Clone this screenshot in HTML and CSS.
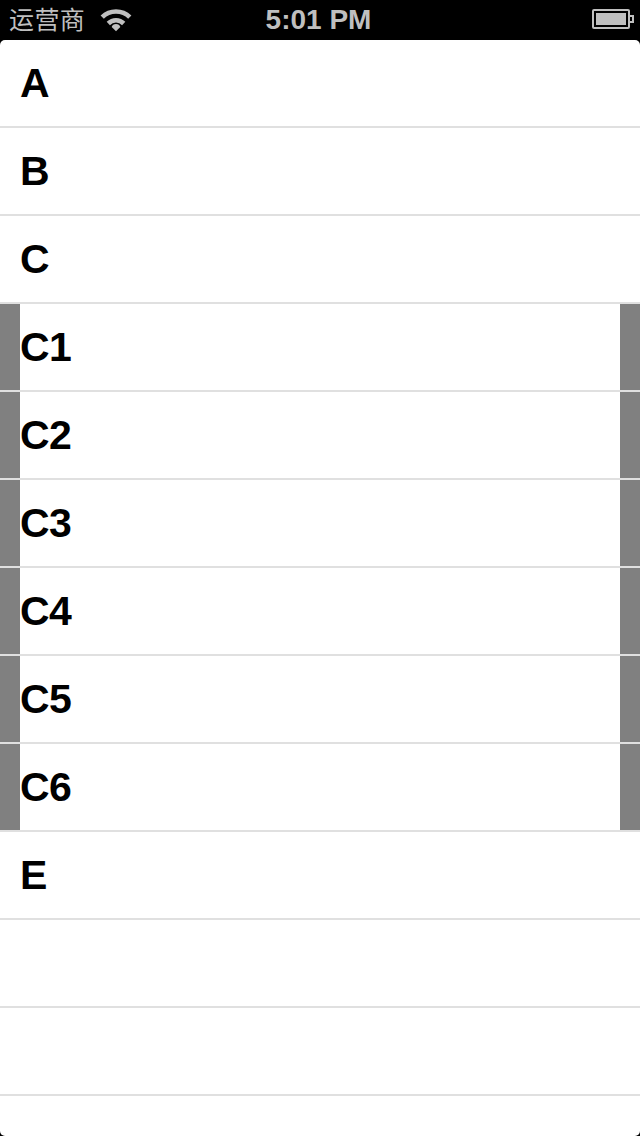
FILE: index.html
```html
<!DOCTYPE html>
<html lang="zh-CN">
<head>
<meta charset="utf-8">
<title>List</title>
<link rel="stylesheet" href="styles.css">
</head>
<body>
<header class="status">
  <div class="status-left">
    <span class="carrier">运营商</span>
    <svg class="wifi" width="32" height="24" viewBox="0 0 32 24">
      <g fill="none" stroke="#bfbfbf" stroke-width="4.6">
        <path d="M2.2 9.2A19.6 19.6 0 0 1 29.8 9.2"/>
        <path d="M8.3 15.5A10.9 10.9 0 0 1 23.7 15.5"/>
      </g>
      <path d="M16 23.3L11.7 19Q12.5 16.1 16 16.1Q19.5 16.1 20.3 19Z" fill="#bfbfbf"/>
    </svg>
  </div>
  <span class="clock">5:01 PM</span>
  <svg class="battery" width="42" height="20" viewBox="0 0 42 20">
    <rect x="1" y="1" width="36" height="18" rx="1" fill="none" stroke="#bfbfbf" stroke-width="2"/>
    <rect x="4" y="4" width="30" height="12" fill="#bfbfbf"/>
    <path d="M38 7H41V13H38" fill="none" stroke="#bfbfbf" stroke-width="2"/>
  </svg>
</header>
<main class="screen">
  <ul class="list">
    <li class="row">A</li>
    <li class="row">B</li>
    <li class="row">C</li>
    <li class="row sub"><span class="cell">C1</span></li>
    <li class="row sub"><span class="cell">C2</span></li>
    <li class="row sub"><span class="cell">C3</span></li>
    <li class="row sub"><span class="cell">C4</span></li>
    <li class="row sub"><span class="cell">C5</span></li>
    <li class="row sub"><span class="cell">C6</span></li>
    <li class="row">E</li>
    <li class="row"></li>
    <li class="row"></li>
  </ul>
</main>
</body>
</html>
```
FILE: styles.css
```css
* { box-sizing: border-box; }
body {
  margin: 0;
  height: 1136px;
  overflow: hidden;
  background: #000;
  font-family: "Liberation Sans", "Noto Sans CJK SC", sans-serif;
}
.status {
  display: grid;
  grid-template-columns: 1fr auto 1fr;
  height: 40px;
  padding: 0 6px 0 9px;
  color: #bfbfbf;
}
.status-left { display: flex; }
.carrier {
  width: 76px;
  font-size: 25px;
  font-weight: 400;
  line-height: 41px;
  letter-spacing: 0.4px;
  white-space: nowrap;
}
.wifi { margin: 8px 0 0 15px; }
.clock {
  margin: 0 6px 0 0;
  font-size: 28px;
  font-weight: 700;
  line-height: 39px;
  white-space: nowrap;
}
.battery { justify-self: end; margin-top: 9px; }
.screen {
  height: 1096px;
  overflow: hidden;
  background: #fff;
  border-radius: 5px;
}
.list { margin: 0; padding: 0; list-style: none; }
.row {
  height: 88px;
  padding: 0 20px;
  border-bottom: 2px solid #e0e0e0;
  color: #000;
  font-size: 41px;
  font-weight: 700;
  line-height: 87px;
  letter-spacing: -0.7px;
}
.sub { background: #808080; }
.cell { display: block; height: 86px; background: #fff; }
```
